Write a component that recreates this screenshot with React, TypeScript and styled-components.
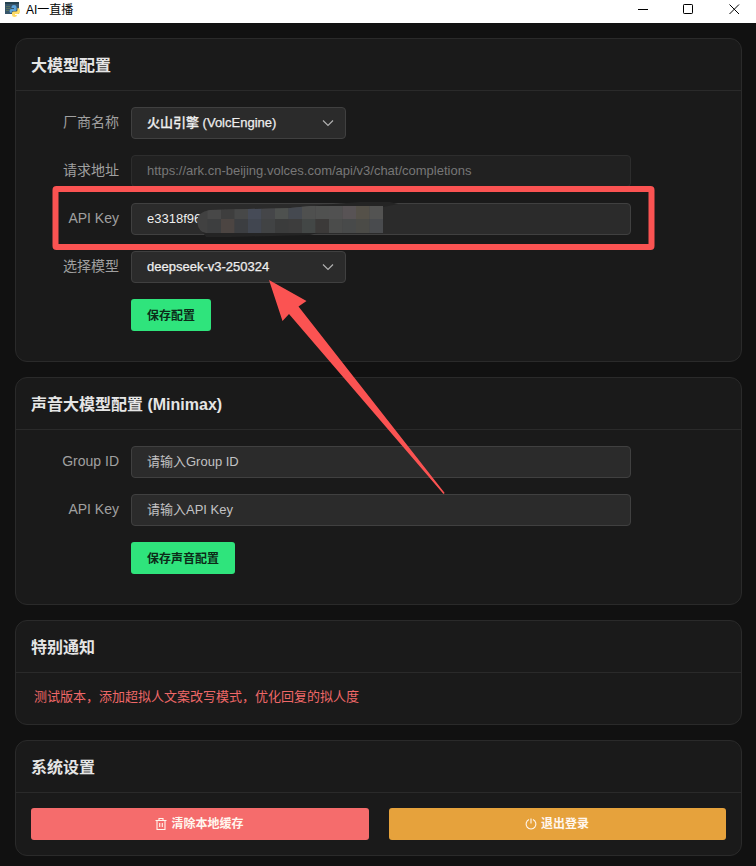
import React from "react";
import styled, { createGlobalStyle } from "styled-components";

const GlobalStyle = createGlobalStyle`
  * { box-sizing: border-box; }
  html, body { margin: 0; padding: 0; background: #111111; }
  body, input, button {
    font-family: "Liberation Sans", "Noto Sans CJK SC", sans-serif;
  }
`;

const Window = styled.div`
  position: relative;
  width: 756px;
  height: 866px;
  overflow: hidden;
  background: #111111;
`;

const TitleBar = styled.header`
  display: flex;
  align-items: center;
  height: 23px;
  padding: 0 16px 4px 5px;
  background: #ffffff;
  color: #000000;
`;

const AppIcon = styled.svg`
  width: 15px;
  height: 15px;
  margin-right: 6px;
  flex: none;
`;

const WindowTitle = styled.div`
  flex: 1;
  font-size: 12px;
  line-height: 18px;
`;

const WindowControls = styled.div`
  display: flex;
  gap: 35px;
`;

const ControlIcon = styled.svg`
  display: block;
  width: 11px;
  height: 11px;
  fill: none;
  stroke: #000000;
`;

const Content = styled.main`
  display: flex;
  flex-direction: column;
  gap: 15px;
  padding: 15px 14px 10px 15px;
`;

const Card = styled.section`
  border: 1px solid #2a2a2a;
  border-radius: 12px;
  background: #1a1a1a;
`;

const CardTitle = styled.h2`
  height: 52px;
  margin: 0;
  padding: 1px 15px 0;
  border-bottom: 1px solid #2a2a2a;
  color: #e5e5e5;
  font-size: 16px;
  font-weight: 700;
  line-height: 52px;
`;

const Form = styled.div`
  display: flex;
  flex-direction: column;
  gap: 16px;
  padding: 16px 15px 30px;
`;

const Field = styled.div`
  display: grid;
  grid-template-columns: 88px 500px;
  column-gap: 12px;
  align-items: center;
  height: 32px;
`;

const Label = styled.label`
  padding-bottom: 2px;
  color: #a0a0a0;
  font-size: 14px;
  line-height: 30px;
  text-align: right;
`;

const Input = styled.input`
  width: 500px;
  height: 32px;
  padding: 0 15px 2px;
  border: 1px solid #404040;
  border-radius: 4px;
  outline: none;
  background: #2b2b2b;
  color: #eeeeee;
  font-size: 13px;

  &::placeholder { color: #c2c2c4; }

  &:disabled {
    border-color: #2d2d2d;
    background: #212121;
    color: #777777;
  }
`;

const SelectBox = styled.div`
  display: flex;
  align-items: center;
  justify-content: space-between;
  width: 215px;
  height: 32px;
  padding: 0 11px 1px 15px;
  border: 1px solid #404040;
  border-radius: 4px;
  background: #2b2b2b;
  color: #eeeeee;
  font-size: 13px;
  font-weight: 500;
  line-height: 30px;
  -webkit-text-stroke: 0.25px #eeeeee;
`;

const Chevron = styled.svg`
  width: 12px;
  height: 12px;
  margin-top: 1px;
  fill: none;
  stroke: #b0b0b0;
  stroke-width: 1.2;
`;

const SaveButton = styled.button`
  grid-column: 2;
  justify-self: start;
  height: 32px;
  padding: 0 16px 1px;
  border: 0;
  border-radius: 3px;
  background: #2fe47c;
  color: #0c2b18;
  font-size: 12px;
  font-weight: 700;
`;

const Notice = styled.p`
  height: 51px;
  margin: 0;
  padding: 0 18px;
  color: #ef6868;
  font-size: 13px;
  line-height: 48px;
`;

const Actions = styled.div`
  display: grid;
  grid-template-columns: 338px 337px;
  gap: 20px;
  padding: 15px;
`;

const ActionButton = styled.button<{ $color: string }>`
  display: flex;
  align-items: center;
  justify-content: center;
  gap: 4px;
  height: 32px;
  padding: 0 1px 0 0;
  border: 0;
  border-radius: 3px;
  background: ${({ $color }) => $color};
  color: #fff6ee;
  font-size: 12px;
  font-weight: 700;
  line-height: 30px;
`;

const ActionIcon = styled.svg`
  width: 12px;
  height: 12px;
  fill: none;
  stroke: currentColor;
  stroke-width: 1.1;
`;

const Annotations = styled.svg`
  position: absolute;
  inset: 0;
  pointer-events: none;
`;

const upperTiles = ["#484848", "#3e3e3e", "#474848", "#464b57", "#454649", "#4e514f", "#454950", "#4f504f", "#505150", "#515151", "#585355", "#555149", "#535352"];
const lowerTiles = ["#3d3e3f", "#4c4542", "#3c3e41", "#414650", "#414344", "#3b3c3c", "#3d3d3d", "#434746", "#3c3a39", "#4b4c4b", "#484a4a", "#4b4b47", "#494b4e"];

function Select({ value }: { value: string }) {
  return (
    <SelectBox role="combobox" aria-expanded={false}>
      {value}
      <Chevron viewBox="0 0 12 12"><path d="M1 3.5 6 8.5 11 3.5" /></Chevron>
    </SelectBox>
  );
}

export default function App() {
  return (
    <>
      <GlobalStyle />
      <Window>
        <TitleBar>
          <AppIcon viewBox="0 0 15 15">
            <path fill="#38566b" d="M0 0h14v12H0z" />
            <path fill="#24414f" d="M0 0h14v2H0z" />
            <path fill="#56705f" d="M1 4h4v1H1zm0 2h5v1H1zm0 2h3v1H1z" />
            <path fill="#5ba3d9" d="M6.500 5q0-2 2.500-2t2.500 2v2.500q0 1.500-1.500 1.500H8q-1.500 0-1.500 2H6Q4.500 11 4.500 9T6.500 7H9V6H6.500z" />
            <path fill="#ffdc67" d="M12.500 6q2.500 0 2.500 3t-2 3h-3v1h2q0 2-2.500 2T7 13v-2q0-1.500 1.500-1.500H11q1.500 0 1.500-1.500z" />
          </AppIcon>
          <WindowTitle>AI一直播</WindowTitle>
          <WindowControls>
            <ControlIcon viewBox="0 0 11 11"><path d="M1 5.500h10" /></ControlIcon>
            <ControlIcon viewBox="0 0 11 11"><rect x=".5" y=".5" width="9" height="9" rx=".7" /></ControlIcon>
            <ControlIcon viewBox="0 0 11 11"><path d="m.5.5 9.500 9.500m0-9.500L.5 10" /></ControlIcon>
          </WindowControls>
        </TitleBar>

        <Content>
          <Card>
            <CardTitle>大模型配置</CardTitle>
            <Form>
              <Field><Label>厂商名称</Label><Select value="火山引擎 (VolcEngine)" /></Field>
              <Field><Label>请求地址</Label><Input disabled defaultValue="https://ark.cn-beijing.volces.com/api/v3/chat/completions" /></Field>
              <Field><Label>API Key</Label><Input defaultValue="e3318f96" /></Field>
              <Field><Label>选择模型</Label><Select value="deepseek-v3-250324" /></Field>
              <Field><SaveButton>保存配置</SaveButton></Field>
            </Form>
          </Card>

          <Card>
            <CardTitle>声音大模型配置 (Minimax)</CardTitle>
            <Form>
              <Field><Label>Group ID</Label><Input placeholder="请输入Group ID" /></Field>
              <Field><Label>API Key</Label><Input placeholder="请输入API Key" /></Field>
              <Field><SaveButton>保存声音配置</SaveButton></Field>
            </Form>
          </Card>

          <Card>
            <CardTitle>特别通知</CardTitle>
            <Notice>测试版本，添加超拟人文案改写模式，优化回复的拟人度</Notice>
          </Card>

          <Card>
            <CardTitle>系统设置</CardTitle>
            <Actions>
              <ActionButton $color="#f56c6c">
                <ActionIcon viewBox="0 0 12 12"><path d="M.5 2.500h11M4 2.500v-2h4v2M2 2.500v9h8v-9M4.700 5v4M7.300 5v4" /></ActionIcon>
                清除本地缓存
              </ActionButton>
              <ActionButton $color="#e6a23c">
                <ActionIcon viewBox="0 0 12 12"><path d="M4 1.600a4.900 4.900 0 1 0 4 0M6 .5v5" /></ActionIcon>
                退出登录
              </ActionButton>
            </Actions>
          </Card>
        </Content>

        <Annotations width="756" height="866" viewBox="0 0 756 866">
          <defs>
            <clipPath id="smear">
              <path d="M197 222Q197 212 210 210L290 208 310 206H383V233H206Q199 233 197 222Z" />
            </clipPath>
          </defs>
          <path fill="#242424" d="M320 205 360 202H390L398 204 383 207H310ZM202 231H325L310 235 230 237H206Z" />
          <g clipPath="url(#smear)">
            <path fill="#414141" d="M197 205h186v28H197z" />
            {upperTiles.map((fill, i) => <rect key={i} x={207.500 + i * 13.500} y="205" width="13.600" height="14" fill={fill} />)}
            {lowerTiles.map((fill, i) => <rect key={i} x={207.500 + i * 13.500} y="219" width="13.600" height="14" fill={fill} />)}
          </g>
          <rect x="55.500" y="189" width="596" height="58" rx="1" fill="none" stroke="#fb5352" strokeWidth="6" strokeLinejoin="round" />
          <path fill="#fb5352" d="M269 280 306.500 301 298.500 306.500 444.700 493 443.500 494 289 314 282.500 321Z" />
        </Annotations>
      </Window>
    </>
  );
}
